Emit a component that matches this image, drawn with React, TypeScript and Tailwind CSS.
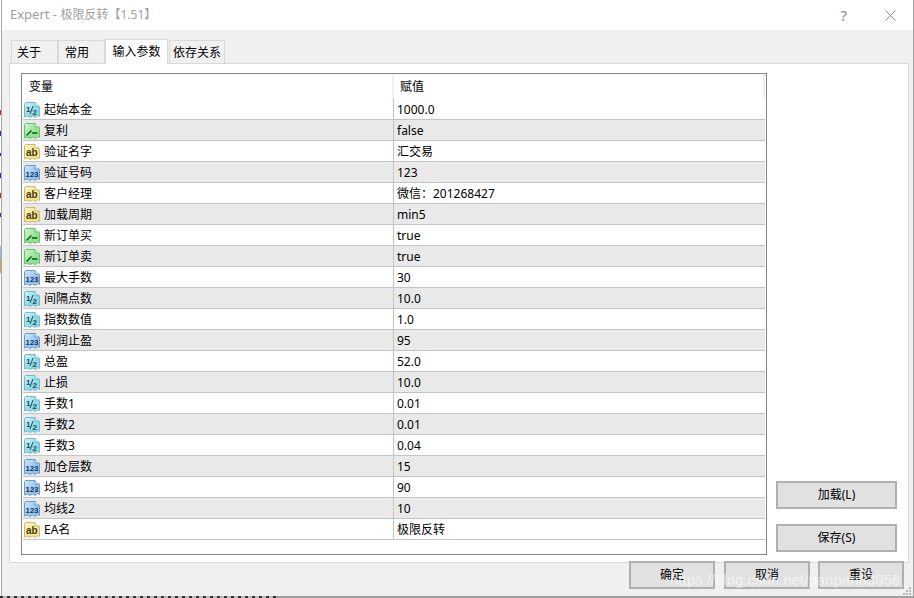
const font = "font-['Noto_Sans','Noto_Sans_CJK_SC',sans-serif]";

type Kind = 'double' | 'bool' | 'string' | 'int';

const rows: { kind: Kind; name: string; value: string }[] = [
  { kind: 'double', name: '起始本金', value: '1000.0' },
  { kind: 'bool', name: '复利', value: 'false' },
  { kind: 'string', name: '验证名字', value: '汇交易' },
  { kind: 'int', name: '验证号码', value: '123' },
  { kind: 'string', name: '客户经理', value: '微信：201268427' },
  { kind: 'string', name: '加载周期', value: 'min5' },
  { kind: 'bool', name: '新订单买', value: 'true' },
  { kind: 'bool', name: '新订单卖', value: 'true' },
  { kind: 'int', name: '最大手数', value: '30' },
  { kind: 'double', name: '间隔点数', value: '10.0' },
  { kind: 'double', name: '指数数值', value: '1.0' },
  { kind: 'int', name: '利润止盈', value: '95' },
  { kind: 'double', name: '总盈', value: '52.0' },
  { kind: 'double', name: '止损', value: '10.0' },
  { kind: 'double', name: '手数1', value: '0.01' },
  { kind: 'double', name: '手数2', value: '0.01' },
  { kind: 'double', name: '手数3', value: '0.04' },
  { kind: 'int', name: '加仓层数', value: '15' },
  { kind: 'int', name: '均线1', value: '90' },
  { kind: 'int', name: '均线2', value: '10' },
  { kind: 'string', name: 'EA名', value: '极限反转' },
];

const palette: Record<Kind, { fill: string; light: string; stroke: string; ink: string }> = {
  double: { fill: '#8fd8e6', light: '#d4f2f6', stroke: '#6cbccd', ink: '#14505e' },
  bool: { fill: '#8fe48c', light: '#d6f6d2', stroke: '#68c070', ink: '#0c5a1c' },
  string: { fill: '#f2e493', light: '#fbf5cf', stroke: '#cdb96a', ink: '#4a3c06' },
  int: { fill: '#93c3ee', light: '#d5e8f9', stroke: '#6a9ccd', ink: '#0f3560' },
};

function TypeIcon({ kind }: { kind: Kind }) {
  const c = palette[kind];
  return (
    <svg width="16" height="16" viewBox="0 0 16 16" className="shrink-0">
      <defs>
        <linearGradient id={`icon-${kind}`} x1="0" y1="0" x2="1" y2="1">
          <stop offset="0" stopColor={c.light} />
          <stop offset="0.6" stopColor={c.fill} />
        </linearGradient>
      </defs>
      <path
        d="M1.500.5H11L15.500 5V14.500L13.500 13.500 11.500 15.500 8.500 14 6 15.500 3.500 14 .5 15V1.500Z"
        fill={`url(#icon-${kind})`}
        stroke={c.stroke}
      />
      <path d="M11 .5V4H15.500" fill="#fff" fillOpacity="0.7" stroke={c.stroke} />
      {kind === 'double' && (
        <>
          <text x="2" y="9.500" fontSize="8" fontWeight="700" fontFamily="Liberation Sans" fill={c.ink}>
            1
          </text>
          <path d="M6 12 9 4" stroke={c.ink} strokeWidth="1" />
          <text x="8.500" y="12.500" fontSize="8" fontWeight="700" fontFamily="Liberation Sans" fill={c.ink}>
            2
          </text>
        </>
      )}
      {kind === 'int' && (
        <text x="1.500" y="11.500" fontSize="7.500" fontWeight="700" fontFamily="Liberation Sans" textLength="13" fill={c.ink}>
          123
        </text>
      )}
      {kind === 'string' && (
        <text x="2" y="12" fontSize="10" fontFamily="Liberation Sans" fontWeight="700" fill={c.ink}>
          ab
        </text>
      )}
      {kind === 'bool' && <path d="M2.500 12.500 7.500 7.500M8 10H13.500" fill="none" stroke={c.ink} strokeWidth="1.400" />}
    </svg>
  );
}

function Tab({ label, className }: { label: string; className: string }) {
  return (
    <div className={`flex h-[23px] items-center border border-b-0 border-[#d9d9d9] bg-[#f0f0f0] pt-px text-[12px] text-black ${className}`}>
      {label}
    </div>
  );
}

function Btn({ label, className }: { label: string; className: string }) {
  return (
    <div className={`flex h-[28px] items-center justify-center border-2 border-[#b0b0b0] bg-[#e1e1e1] text-[12px] text-black ${className}`}>
      {label}
    </div>
  );
}

function LeftEdge() {
  return (
    <div className="flex w-[2px] shrink-0 flex-col border-r border-[#a8a8a8] bg-white">
      <div className="mt-[110px] h-[5px] bg-[#e02020]" />
      <div className="mt-[16px] h-[5px] bg-[#2030d0]" />
      <div className="mt-[17px] h-[3px] bg-[#2030d0]" />
      <div className="mt-[17px] h-[5px] bg-[#2030d0]" />
      <div className="mt-[15px] h-[5px] bg-[#e02020]" />
      <div className="mt-[15px] h-[4px] bg-[#2030d0]" />
      <div className="mt-[29px] h-[13px] bg-[#9fb7d8]" />
      <div className="h-[14px] bg-[#c8a860]" />
    </div>
  );
}

export default function App() {
  return (
    <div className={`relative flex h-[598px] w-[914px] flex-col overflow-hidden bg-white ${font}`}>
      <div className="flex min-h-0 flex-1">
        <LeftEdge />
        <div className="flex min-w-0 flex-1 flex-col border-r border-[#a0a0a0]">
          <div className="flex h-[30px] shrink-0 items-center bg-white pl-[8px] text-[12px] text-[#a0a0a0]">
            <span className="text-[13px]">Expert -&nbsp;</span>
            <span>极限反转【1.51】</span>
            <span className="ml-auto mr-[38px] text-[15px] text-[#8a8a8a]">?</span>
            <svg width="11" height="11" viewBox="0 0 11 11" className="mr-[17px]">
              <path d="M.5.5 10.500 10.500M10.500.5.5 10.500" stroke="#8a8a8a" fill="none" />
            </svg>
          </div>
          <div className="flex min-h-0 flex-1 flex-col bg-[#f0f0f0] pl-[7px] pr-[4px] pt-[9px]">
            <div className="flex items-end pl-[2px]">
              <Tab label="关于" className="w-[47px] pl-[5px]" />
              <Tab label="常用" className="w-[47px] pl-[6px]" />
              <div className="relative z-10 -mb-px flex h-[25px] w-[63px] items-center justify-center border border-b-0 border-[#d9d9d9] bg-white text-[12px] text-black">
                输入参数
              </div>
              <Tab label="依存关系" className="ml-px w-[56px] pl-[3px]" />
            </div>
            <div className="flex h-[500px] shrink-0 border border-[#d9d9d9] bg-white pl-[11px] pr-[9px] pt-[9px]">
              <div className="flex h-[482px] w-[746px] shrink-0 flex-col border border-[#82878c] bg-white px-px">
                <div className="flex h-[25px] shrink-0 text-[12px] text-black">
                  <div className="flex w-[371px] items-center border-r-2 border-[#efefef] pl-[6px]">变量</div>
                  <div className="flex flex-1 items-center pl-[6px]">赋值</div>
                  <div className="w-[2px] bg-[#efefef]" />
                </div>
                {rows.map((r, i) => (
                  <div
                    key={r.name}
                    className={`flex h-[21px] shrink-0 border-b border-[#c4c4c4] text-[12px] text-black ${i % 2 === 1 ? 'bg-[#e9e9e9]' : 'bg-white'}`}
                  >
                    <div className="flex w-[371px] items-center gap-[4px] border-r border-[#c4c4c4] pl-px pt-[2px]">
                      <TypeIcon kind={r.kind} />
                      <span>{r.name}</span>
                    </div>
                    <div className="flex items-center pl-[3px] pt-[2px]">{r.value}</div>
                  </div>
                ))}
              </div>
              <div className="ml-[9px] flex flex-1 flex-col justify-end gap-[15px] pb-[10px] pr-[2px]">
                <Btn label="加载(L)" className="w-full" />
                <Btn label="保存(S)" className="w-full" />
              </div>
            </div>
            <div className="relative z-10 -mt-[3px] flex justify-end gap-[8px] pr-[5px] pt-px">
              <Btn label="确定" className="mr-px w-[86px]" />
              <Btn label="取消" className="w-[86px]" />
              <Btn label="重设" className="w-[86px]" />
            </div>
          </div>
        </div>
      </div>
      <div className="flex h-[2px] shrink-0">
        <div className="w-[276px] bg-[repeating-linear-gradient(90deg,#333333_0,#333333_3px,#bbbbbb_3px,#bbbbbb_7px)]" />
        <div className="flex-1 bg-[#a0a0a0]" />
      </div>
      <svg width="8" height="8" viewBox="0 0 8 8" className="absolute bottom-[3px] right-[3px]">
        <path d="M6 0h2v2H6zM3 3h2v2H3zM6 3h2v2H6zM0 6h2v2H0zM3 6h2v2H3zM6 6h2v2H6z" fill="#b8b8b8" />
      </svg>
      <div className="absolute left-[670px] top-[569px] z-20 font-['Liberation_Sans',sans-serif] text-[15px] whitespace-nowrap text-white/60">
        https://blog.csdn.net/panpan83956
      </div>
    </div>
  );
}
